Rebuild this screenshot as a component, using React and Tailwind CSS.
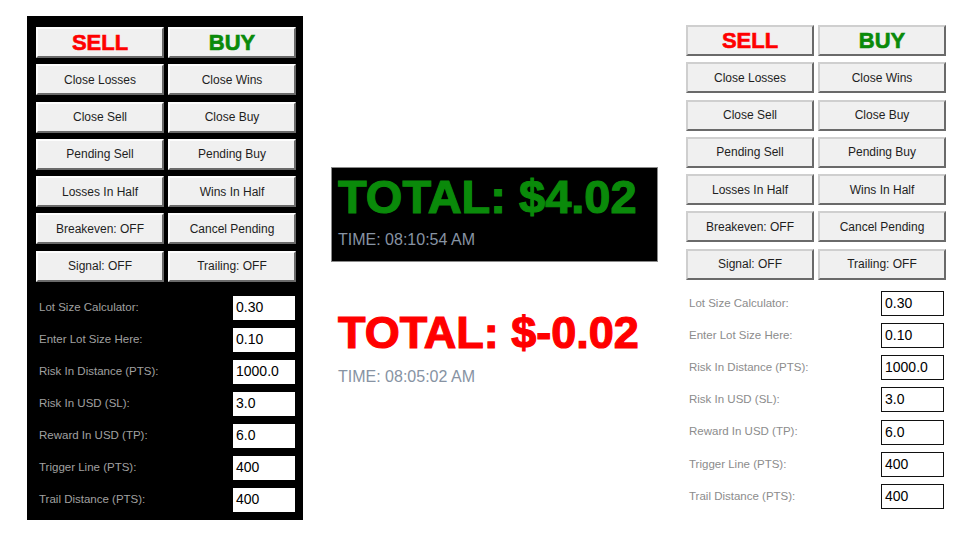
import React from "react";

const buttons = [
  ["Close Losses", "Close Wins"],
  ["Close Sell", "Close Buy"],
  ["Pending Sell", "Pending Buy"],
  ["Losses In Half", "Wins In Half"],
  ["Breakeven: OFF", "Cancel Pending"],
  ["Signal: OFF", "Trailing: OFF"],
];

const fields = [
  ["Lot Size Calculator:", "0.30"],
  ["Enter Lot Size Here:", "0.10"],
  ["Risk In Distance (PTS):", "1000.0"],
  ["Risk In USD (SL):", "3.0"],
  ["Reward In USD (TP):", "6.0"],
  ["Trigger Line (PTS):", "400"],
  ["Trail Distance (PTS):", "400"],
];

const font = { fontFamily: '"Liberation Sans", Arial, sans-serif' };

const Btn = ({ children, dark, className = "" }) => (
  <div
    className={
      "h-[31px] flex items-center justify-center bg-[#f0f0f0] border-2 border-b-[#6a6a6a] border-r-[#6a6a6a] " +
      (dark
        ? "border-t-[#fdfdfd] border-l-[#fdfdfd] "
        : "border-t-[#cfcfcf] border-l-[#cfcfcf] ") +
      className
    }
  >
    {children}
  </div>
);

const Panel = ({ dark }) => (
  <div
    className={
      dark
        ? "w-[276px] h-[504px] bg-black pl-[9px] pr-[8px] pt-[11px]"
        : "w-[258px] pt-0"
    }
  >
    <div className="grid grid-cols-[128px_128px] gap-x-[4px] gap-y-[6.3px]">
      <Btn dark={dark} className="text-[22px] font-bold text-[#ff0000] [-webkit-text-stroke:0.6px_#ff0000]">
        SELL
      </Btn>
      <Btn dark={dark} className="text-[22px] font-bold text-[#0a8a0a] [-webkit-text-stroke:0.6px_#0a8a0a]">
        BUY
      </Btn>
      {buttons.flat().map((b) => (
        <Btn key={b} dark={dark} className="text-[12px] text-[#1e1e1e]">
          {b}
        </Btn>
      ))}
    </div>
    <div
      className={
        dark
          ? "flex flex-col gap-y-[8px] mt-[14px]"
          : "flex flex-col gap-y-[7.2px] mt-[11px]"
      }
    >
      {fields.map(([l, v]) => (
        <div key={l} className="flex items-center justify-between">
          <span
            className={
              dark
                ? "text-[11.5px] text-[#a0a0a0] pl-[3px]"
                : "text-[11.5px] text-[#8c8c8c] pl-[3px]"
            }
          >
            {l}
          </span>
          <div
            className={
              dark
                ? "w-[62px] h-[24px] bg-white flex items-center pl-[3px] text-[14px] text-black"
                : "w-[63px] h-[25px] bg-white border-[1.5px] border-[#111] flex items-center pl-[3px] text-[14px] text-black"
            }
          >
            {v}
          </div>
        </div>
      ))}
    </div>
  </div>
);

export default function App() {
  return (
    <div className="w-[960px] h-[540px] bg-white flex items-start overflow-hidden" style={font}>
      <div className="ml-[27px] mt-[16px]">
        <Panel dark />
      </div>
      <div className="ml-[28px] mt-[167px] flex flex-col">
        <div className="w-[327px] h-[95px] bg-black border border-[#8a8a8a] pl-[6px] pt-[4px]">
          <div className="text-[47px] leading-[50px] font-bold text-[#0a8a0a] [-webkit-text-stroke:1.2px_#0a8a0a] whitespace-nowrap">
            TOTAL: $4.02
          </div>
          <div className="text-[16px] leading-[20px] mt-[8px] text-[#8793a3]">
            TIME: 08:10:54 AM
          </div>
        </div>
        <div className="pl-[7px] mt-[47px]">
          <div className="text-[45px] leading-[48px] font-bold text-[#ff0000] [-webkit-text-stroke:1.2px_#ff0000] whitespace-nowrap">
            TOTAL: $-0.02
          </div>
          <div className="text-[16px] leading-[20px] mt-[10px] text-[#8793a3]">
            TIME: 08:05:02 AM
          </div>
        </div>
      </div>
      <div className="ml-[28px] mt-[25px]">
        <Panel />
      </div>
    </div>
  );
}
